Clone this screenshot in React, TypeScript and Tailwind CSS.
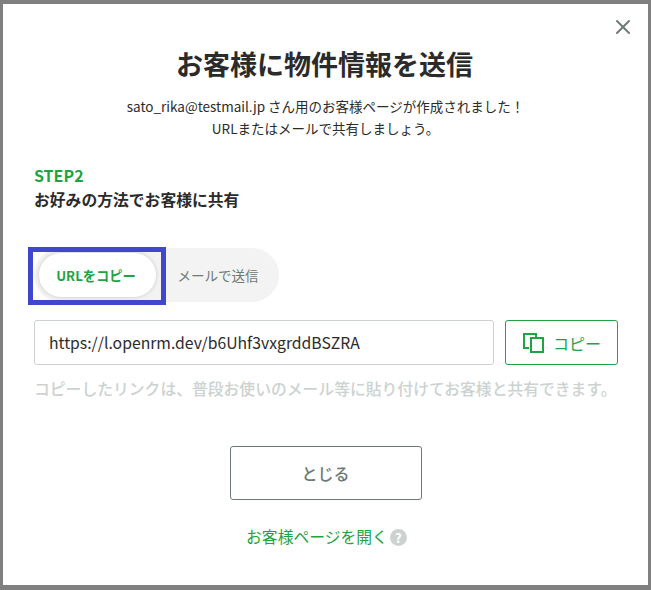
import { X } from 'lucide-react'

const font = { fontFamily: '"Noto Sans CJK JP", "Noto Sans", sans-serif' }

export default function App() {
  return (
    <div className="w-[651px] h-[590px] bg-[#808080] pt-1 pb-[5px] pl-[3px] pr-[3px]" style={font}>
      <div className="relative h-full bg-white px-[31px] pt-[41px] flex flex-col">
        <button className="absolute top-[11px] right-[13px] text-[#6b7a75]">
          <X className="w-[24px] h-[24px]" strokeWidth={2} />
        </button>

        <h1 className="text-center text-[27px] leading-[38px] font-bold text-[#2b2b2b] pr-[2px]">お客様に物件情報を送信</h1>
        <p className="mt-[12px] text-center text-[13.5px] leading-[22px] text-[#2b2b2b]">
          sato_rika@testmail.jp さん用のお客様ページが作成されました！
          <br />
          URLまたはメールで共有しましょう。
        </p>

        <div className="mt-[25px] text-[16px] leading-[22px] font-bold text-[#1fa343]">STEP2</div>
        <div className="mt-[3px] text-[15.8px] leading-[22px] font-bold text-[#2b2b2b]">お好みの方法でお客様に共有</div>

        <div className="relative mt-[37px] w-[245px] h-[54px] rounded-full bg-[#f3f3f3] p-[5px] flex items-center">
          <div className="w-[117px] h-[44px] pr-[3px] pt-[1px] rounded-full bg-white shadow-[0_0_4px_rgba(0,0,0,0.18)] flex items-center justify-center text-[13.25px] font-bold text-[#1fa343]">
            URLをコピー
          </div>
          <div className="flex-1 pl-[6px] text-center text-[13.5px] text-[#6b7a75]">メールで送信</div>
          <div className="absolute left-[-6px] top-[-1px] w-[138px] h-[58px] border-[5px] border-[#4147cc]" />
        </div>

        <div className="mt-[18px] flex gap-[11px]">
          <div className="w-[460px] shrink-0 h-[45px] rounded-[3px] border border-[#ccd2cf] px-[14px] flex items-center text-[15.75px] text-[#2b2b2b]">
            https://l.openrm.dev/b6Uhf3vxgrddBSZRA
          </div>
          <button className="w-[113px] shrink-0 h-[45px] pl-[1px] rounded-[3px] border border-[#1fa343] flex items-center justify-center gap-[9px] text-[16px] text-[#1fa343]">
            <svg width="21" height="21" viewBox="0 0 21 21" fill="none" stroke="currentColor" strokeWidth="2">
              <path d="M6 16H1V2H13V5.5" />
              <rect x="8" y="6" width="12" height="14" />
            </svg>
            コピー
          </button>
        </div>

        <p className="mt-[13px] text-[15.8px] leading-[22px] font-medium text-[#ccd2cf] whitespace-nowrap">
          コピーしたリンクは、普段お使いのメール等に貼り付けてお客様と共有できます。
        </p>

        <button className="mt-[46px] mx-auto w-[192px] h-[54px] rounded-[3px] border border-[#6b7a75] text-[16px] font-medium text-[#6b7a75]">
          とじる
        </button>

        <div className="mt-[25px] pl-[2px] flex items-center justify-center gap-[2px] text-[15.8px] leading-[24px] text-[#1fa343]">
          お客様ページを開く
          <span className="w-[17px] h-[17px] rounded-full bg-[#ccd2cf] text-white text-[13px] leading-[17px] font-bold text-center">?</span>
        </div>
      </div>
    </div>
  )
}
